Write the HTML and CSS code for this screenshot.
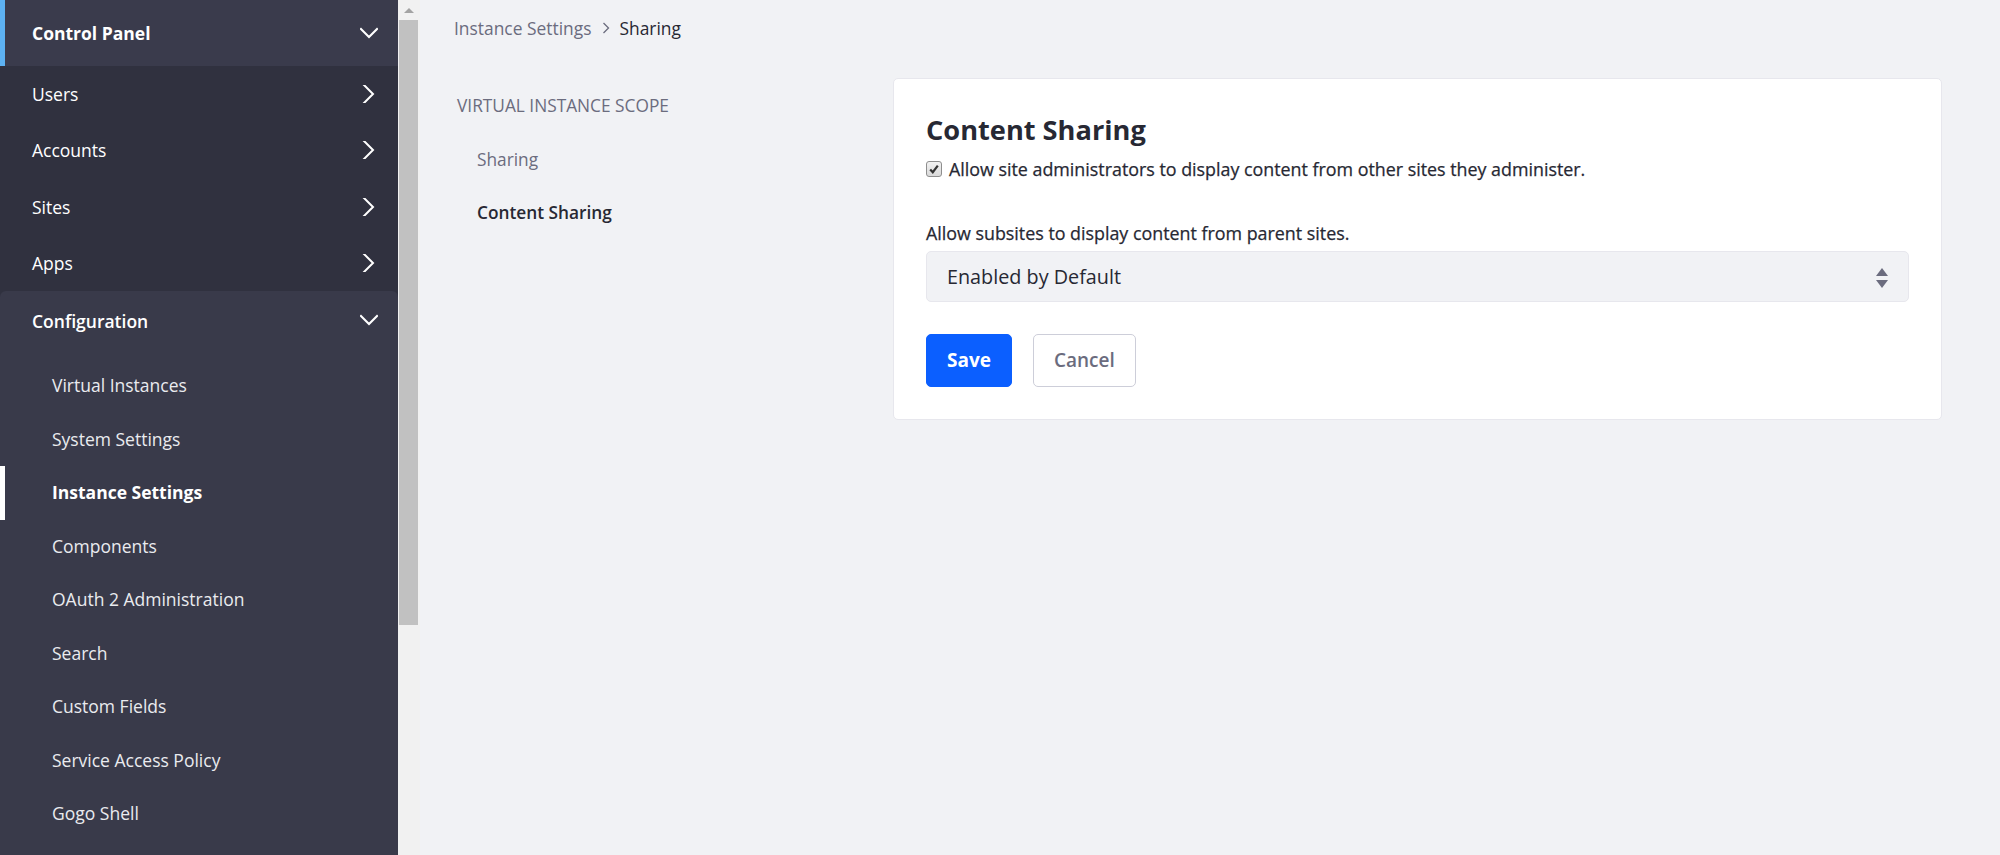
FILE: index.html
```html
<!DOCTYPE html>
<html lang="en">
<head>
<meta charset="utf-8">
<title>Instance Settings - Sharing</title>
<link rel="stylesheet" href="styles.css">
</head>
<body>
<div class="app">
  <aside class="sidebar">
    <div class="panel-header">
      <span class="panel-title">Control Panel</span>
      <svg class="chev" viewBox="0 0 18 18"><path d="M1 4 L9 12 L17 4"/></svg>
    </div>
    <ul class="menu">
      <li class="menu-item"><span>Users</span><svg class="chev" viewBox="0 0 18 18"><path d="M4 0 L13 9 L4 18"/></svg></li>
      <li class="menu-item"><span>Accounts</span><svg class="chev" viewBox="0 0 18 18"><path d="M4 0 L13 9 L4 18"/></svg></li>
      <li class="menu-item"><span>Sites</span><svg class="chev" viewBox="0 0 18 18"><path d="M4 0 L13 9 L4 18"/></svg></li>
      <li class="menu-item"><span>Apps</span><svg class="chev" viewBox="0 0 18 18"><path d="M4 0 L13 9 L4 18"/></svg></li>
    </ul>
    <div class="config">
      <div class="config-header">
        <span>Configuration</span>
        <svg class="chev" viewBox="0 0 18 18"><path d="M1 4 L9 12 L17 4"/></svg>
      </div>
      <ul class="sub">
        <li class="sub-item">Virtual Instances</li>
        <li class="sub-item">System Settings</li>
        <li class="sub-item active">Instance Settings</li>
        <li class="sub-item">Components</li>
        <li class="sub-item">OAuth 2 Administration</li>
        <li class="sub-item">Search</li>
        <li class="sub-item">Custom Fields</li>
        <li class="sub-item">Service Access Policy</li>
        <li class="sub-item">Gogo Shell</li>
      </ul>
    </div>
  </aside>
  <div class="scrollbar">
    <div class="scroll-btn"><svg viewBox="0 0 10 6"><path d="M0 6 L5 1 L10 6 Z"/></svg></div>
    <div class="scroll-thumb"></div>
  </div>
  <main class="main">
    <nav class="breadcrumb">
      <span class="crumb">Instance Settings</span>
      <svg class="crumb-sep" viewBox="0 0 8 12"><path d="M1.5 1 L6.5 6 L1.5 11"/></svg>
      <span class="crumb current">Sharing</span>
    </nav>
    <div class="content">
      <ul class="side-nav">
        <li class="side-nav-header">VIRTUAL INSTANCE SCOPE</li>
        <li class="side-nav-item">Sharing</li>
        <li class="side-nav-item selected">Content Sharing</li>
      </ul>
      <section class="card">
        <h2 class="card-title">Content Sharing</h2>
        <label class="check-row">
          <span class="checkbox"><svg viewBox="0 0 12 12"><path d="M2.2 6.4 L4.8 9.2 L9.8 2.6"/></svg></span>
          <span class="check-label">Allow site administrators to display content from other sites they administer.</span>
        </label>
        <div class="field-label">Allow subsites to display content from parent sites.</div>
        <div class="select">
          <span class="select-value">Enabled by Default</span>
          <svg class="select-arrows" viewBox="0 0 12 20"><path d="M6 0 L12 8 L0 8 Z"/><path d="M0 12 L12 12 L6 20 Z"/></svg>
        </div>
        <div class="buttons">
          <button class="btn btn-primary" type="button">Save</button>
          <button class="btn btn-secondary" type="button">Cancel</button>
        </div>
      </section>
    </div>
  </main>
</div>
</body>
</html>
```
FILE: styles.css
```css
* { box-sizing: border-box; }
html, body {
  margin: 0;
  padding: 0;
  height: 100%;
  overflow: hidden;
}
body {
  font-family: "Open Sans", "Noto Sans", "Liberation Sans", sans-serif;
  background: #f1f2f5;
  color: #272833;
}
ul { list-style: none; margin: 0; padding: 0; }

.app {
  display: flex;
  height: 855px;
}

/* Sidebar */
.sidebar {
  width: 398px;
  flex: 0 0 398px;
  background: #30313f;
  color: #fff;
  overflow: hidden;
  font-size: 17.5px;
  display: flex;
  flex-direction: column;
}
.chev {
  width: 18px;
  height: 18px;
  flex: 0 0 18px;
}
.chev path {
  fill: none;
  stroke: #fff;
  stroke-width: 2;
  stroke-linecap: square;
}
.panel-header {
  height: 66px;
  flex: 0 0 66px;
  background: #3a3b4c;
  border-left: 5px solid #5db1f2;
  padding: 0 20px 0 27px;
  display: flex;
  align-items: center;
  justify-content: space-between;
}
.panel-title {
  font-weight: 700;
  color: #fff;
}
.panel-header .chev { margin-top: 2px; }
.menu-item {
  height: 56.25px;
  padding: 0 20px 0 32px;
  display: flex;
  align-items: center;
  justify-content: space-between;
  color: #fff;
}
.config {
  flex: 1;
  background: #393a4a;
  border-radius: 6px 6px 0 0;
}
.config-header {
  height: 60px;
  padding: 0 20px 0 32px;
  display: flex;
  align-items: center;
  justify-content: space-between;
  color: #fff;
  font-weight: 600;
}
.sub {
  padding-top: 8px;
}
.sub-item {
  height: 53.5px;
  line-height: 53.5px;
  padding-left: 52px;
  color: #eaebef;
}
.sub-item.active {
  font-weight: 700;
  color: #fff;
  box-shadow: inset 5px 0 0 #fff;
}

/* Scrollbar */
.scrollbar {
  width: 22px;
  flex: 0 0 22px;
  background: #f1f1f1;
  display: flex;
  flex-direction: column;
}
.scroll-btn {
  height: 20px;
  display: flex;
  align-items: center;
  justify-content: center;
}
.scroll-btn svg {
  width: 10px;
  height: 6px;
}
.scroll-btn path { fill: #a3a3a3; }
.scroll-thumb {
  height: 605px;
  margin: 0 2px 0 1px;
  background: #c1c1c1;
}

/* Main */
.main {
  flex: 1;
  padding: 16px 58px 0 34px;
}
.breadcrumb {
  height: 24px;
  display: flex;
  align-items: center;
  font-size: 17.4px;
  line-height: 24px;
}
.crumb { color: #6b6c7e; }
.crumb.current { color: #272833; }
.crumb-sep {
  width: 8px;
  height: 12px;
  margin: 0 9px 0 11px;
}
.crumb-sep path {
  fill: none;
  stroke: #6b6c7e;
  stroke-width: 1.3;
}
.content {
  margin-top: 38px;
  display: grid;
  grid-template-columns: 439px 1fr;
  align-items: start;
}
.side-nav {
  padding-top: 1px;
  font-size: 17.3px;
}
.side-nav-header {
  height: 53.5px;
  line-height: 53.5px;
  padding-left: 3px;
  color: #6b6c7e;
}
.side-nav-item {
  height: 53.5px;
  line-height: 53.5px;
  padding-left: 23px;
  color: #6b6c7e;
}
.side-nav-item.selected {
  color: #272833;
  font-weight: 600;
}

/* Card */
.card {
  background: #fff;
  border: 1px solid #e7e7ed;
  border-radius: 5px;
  padding: 35px 32px 32px;
}
.card-title {
  margin: 0;
  font-size: 27.2px;
  line-height: 32px;
  font-weight: 700;
  color: #272833;
}
.check-row {
  margin-top: 11px;
  height: 24px;
  display: flex;
  align-items: center;
  font-size: 17.85px;
  font-weight: 400;
  -webkit-text-stroke: 0.25px #272833;
  color: #272833;
}
.checkbox {
  width: 16px;
  height: 16px;
  flex: 0 0 16px;
  border: 1px solid #8e8e8e;
  border-radius: 3px;
  background: linear-gradient(#f2f2f2, #d9d9d9);
  display: flex;
  align-items: center;
  justify-content: center;
  margin-right: 7px;
}
.checkbox svg {
  width: 12px;
  height: 12px;
}
.checkbox path {
  fill: none;
  stroke: #333;
  stroke-width: 2.2;
}
.field-label {
  margin-top: 40px;
  line-height: 24px;
  font-size: 17.85px;
  font-weight: 400;
  -webkit-text-stroke: 0.25px #272833;
  color: #272833;
}
.select {
  margin-top: 6px;
  height: 51px;
  background: #f1f2f5;
  border: 1px solid #e7e7ed;
  border-radius: 5px;
  padding: 0 20px 0 20px;
  display: flex;
  align-items: center;
  justify-content: space-between;
  font-size: 19.8px;
  color: #272833;
}
.select-arrows {
  width: 12px;
  height: 20px;
  margin-top: 2px;
}
.select-arrows path { fill: #6b6c7e; }
.buttons {
  margin-top: 32px;
  display: flex;
  gap: 21px;
}
.btn {
  height: 53px;
  padding: 0 20px;
  border-radius: 5px;
  font-family: inherit;
  font-size: 19px;
  line-height: 1;
  cursor: pointer;
}
.btn-primary {
  background: #0b5fff;
  border: 1px solid #0b5fff;
  color: #fff;
  font-weight: 700;
}
.btn-secondary {
  background: #fff;
  border: 1px solid #cdced9;
  color: #6b6c7e;
  font-weight: 600;
}
```
